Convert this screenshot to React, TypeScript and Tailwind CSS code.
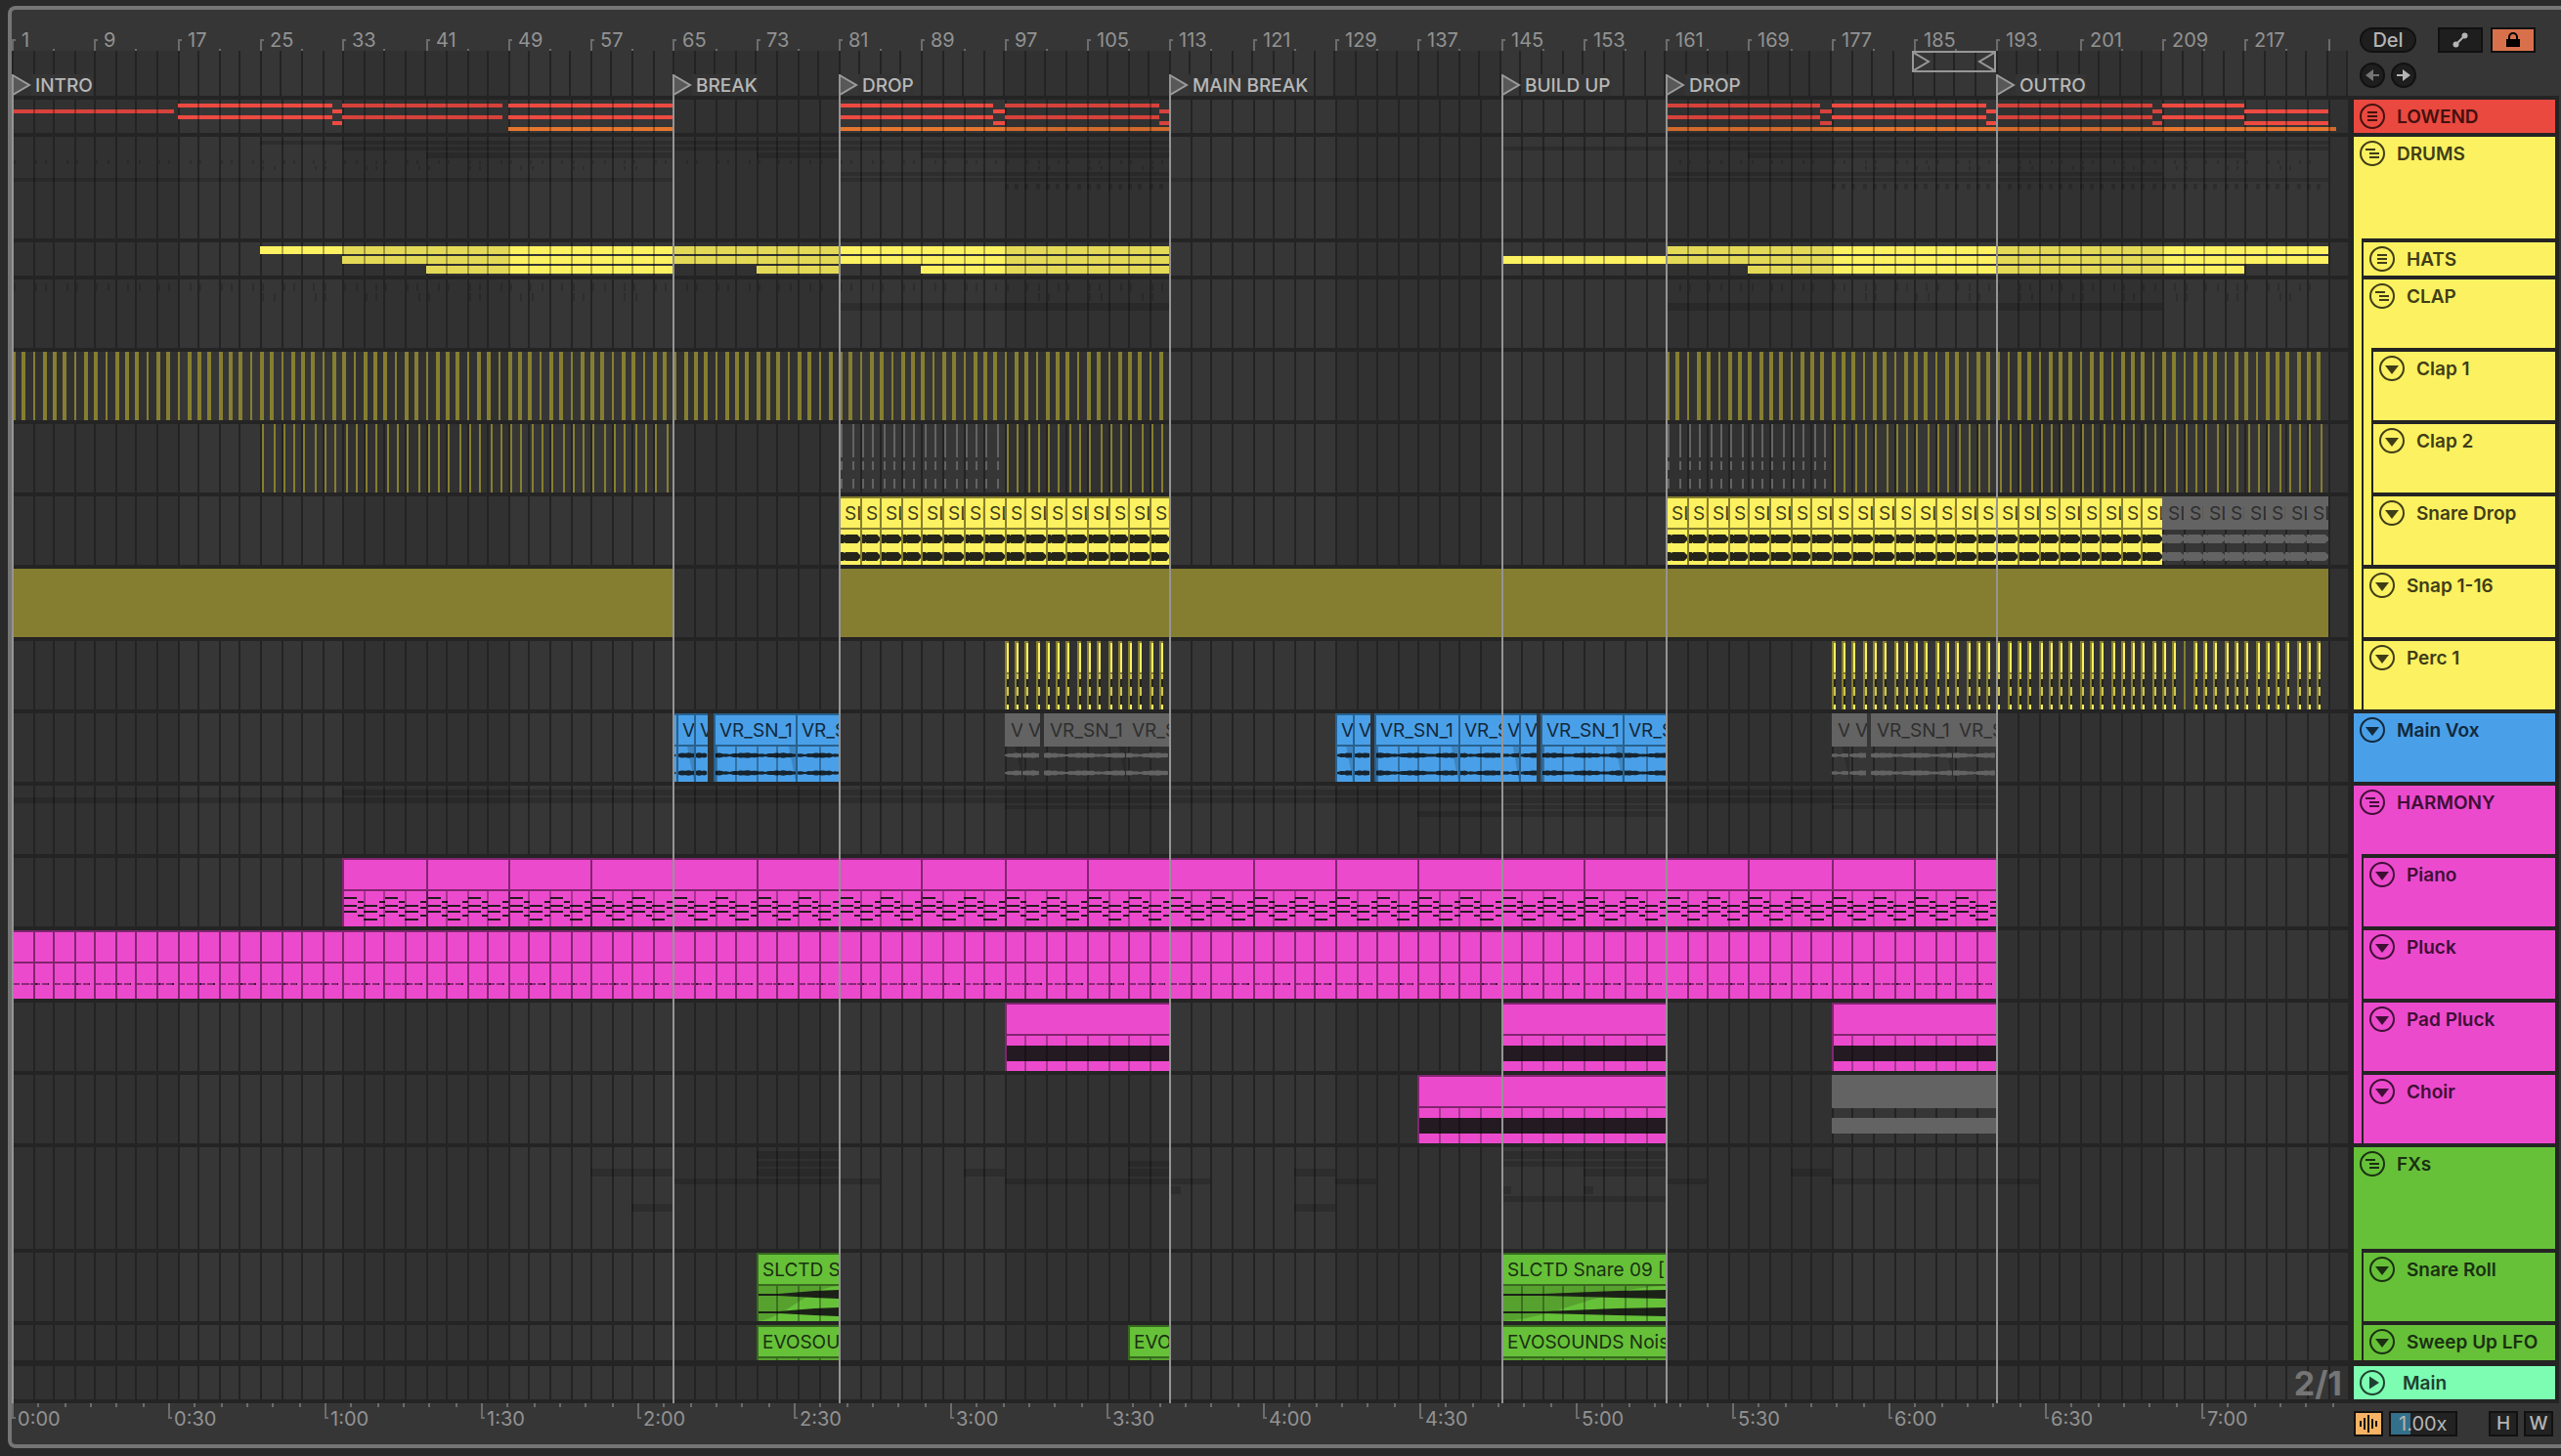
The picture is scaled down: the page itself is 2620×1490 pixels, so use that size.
import type { CSSProperties, ReactNode } from 'react';
import clsx from 'clsx';

const TOTAL_BARS = 225.96;
const SECONDS_PER_BAR = 240 / 121;

type Range = [number, number];

const range = (from: number, to: number, step = 1) => {
  const out: number[] = [];
  for (let n = from; n < to; n += step) out.push(n);
  return out;
};

// Timeline positions follow the window width, snapped to the 2px grid
const at = (bar: number) => `round(nearest, ${((bar - 1) / TOTAL_BARS) * 100}%, 2px)`;
const left = (bar: number): CSSProperties => ({ left: at(bar) });
const span = (from: number, to: number): CSSProperties => ({
  left: at(from),
  width: `calc(${at(to)} - ${at(from)})`,
});

// Cut a range at every 16 bar section, since odd sections are shaded
const sections = (from: number, to: number) => {
  const out: { from: number; to: number; shaded: boolean }[] = [];
  let start = from;
  while (start < to) {
    const index = Math.floor((start - 1) / 16);
    const end = Math.min(to, (index + 1) * 16 + 1);
    out.push({ from: start, to: end, shaded: index % 2 === 0 });
    start = end;
  }
  return out;
};

const linesInside = ([from, to]: Range) =>
  range(1, TOTAL_BARS + 1, 2).filter((bar) => bar > from && bar < to);

const locators = [
  { bar: 1, name: 'INTRO' },
  { bar: 65, name: 'BREAK' },
  { bar: 81, name: 'DROP' },
  { bar: 113, name: 'MAIN BREAK' },
  { bar: 145, name: 'BUILD UP' },
  { bar: 161, name: 'DROP' },
  { bar: 193, name: 'OUTRO' },
];

function Grid() {
  return (
    <div className="absolute inset-0 overflow-hidden">
      {sections(1, TOTAL_BARS + 1).map((s) => (
        <div
          key={s.from}
          className={clsx('absolute inset-y-0', s.shaded ? 'bg-[#313131]' : 'bg-[#363636]')}
          style={span(s.from, s.to)}
        />
      ))}
      {range(1, TOTAL_BARS + 1, 2).map((bar) => (
        <div key={bar} className="absolute inset-y-0 w-[2px] bg-[#232323]" style={left(bar)} />
      ))}
    </div>
  );
}

function BarRuler() {
  return (
    <div className="relative mr-[6px] h-[42px] text-xl text-[#929292]">
      {range(1, 225, 8).map((bar) => (
        <div key={bar} className="absolute inset-y-0" style={left(bar)}>
          <div className="absolute top-[30px] h-3 w-1 border-t-2 border-l-2 border-[#6c6c6c]" />
          <span className="absolute top-5 left-[10px] leading-[22px]">{bar}</span>
        </div>
      ))}
      {range(5, 225, 8).map((bar) => (
        <div key={bar} className="absolute bottom-0 h-[2px] w-[2px] bg-[#6c6c6c]" style={left(bar)} />
      ))}
      <div className="absolute bottom-0 h-3 w-[2px] bg-[#6c6c6c]" style={left(225)} />
    </div>
  );
}

function TimeRuler() {
  const toBar = (seconds: number) => seconds / SECONDS_PER_BAR + 1;
  return (
    <div className="relative mr-[6px] h-[42px] text-xl text-[#929292]">
      {range(0, 448, 5).map((seconds) =>
        seconds % 30 === 0 ? (
          <div key={seconds} className="absolute inset-y-0" style={left(toBar(seconds))}>
            <div className="absolute top-0 h-4 w-1 border-b-2 border-l-2 border-[#6c6c6c]" />
            <span className="absolute top-0 left-[6px] leading-8">
              {Math.floor(seconds / 60)}:{String(seconds % 60).padStart(2, '0')}
            </span>
          </div>
        ) : (
          <div
            key={seconds}
            className="absolute top-0 h-1 w-[2px] bg-[#6c6c6c]"
            style={left(toBar(seconds))}
          />
        )
      )}
    </div>
  );
}

function LoopBrace() {
  return (
    <div className="absolute top-0 flex h-[22px] justify-between border-2 border-[#979797]" style={span(185, 193.1)}>
      <svg width="18" height="18" viewBox="0 0 18 18" fill="none" stroke="#979797" strokeWidth="2">
        <path d="M0 0L15 9L0 18" />
      </svg>
      <svg width="18" height="18" viewBox="0 0 18 18" fill="none" stroke="#979797" strokeWidth="2">
        <path d="M18 0L3 9L18 18" />
      </svg>
    </div>
  );
}

function Locators() {
  return (
    <div className="pointer-events-none absolute top-[66px] right-[6px] bottom-[42px] left-0">
      {locators.map(({ bar, name }) => (
        <div key={bar} className="absolute inset-y-0" style={left(bar)}>
          <div className="absolute inset-y-0 w-[2px] bg-[#949494]" />
          <div className="flex h-[22px]">
            <svg width="20" height="22" viewBox="0 0 20 22" className="shrink-0">
              <path d="M1 1L18 11L1 21Z" fill="#585858" stroke="#9c9c9c" strokeWidth="2" />
            </svg>
            <span className="bg-[#343434] pl-1 font-medium leading-6 whitespace-nowrap text-[#b8b8b8]">
              {name}
            </span>
          </div>
        </div>
      ))}
    </div>
  );
}

function Lane({ height, gap, children }: { height: string; gap?: string; children?: ReactNode }) {
  return (
    <div className={clsx('relative border-[#242424]', gap ?? 'border-t-4')}>
      <div className={clsx('relative overflow-hidden', height)}>{children}</div>
    </div>
  );
}

interface BandProps {
  place: string;
  ranges: Range[];
  color: string;
  shade?: string;
}

function Band({ place, ranges, color, shade }: BandProps) {
  return (
    <>
      {ranges.map(([from, to]) =>
        sections(from, to).map((s) => (
          <div
            key={s.from}
            className={clsx('absolute', place, s.shaded && shade ? shade : color)}
            style={span(s.from, s.to)}
          />
        ))
      )}
      {shade &&
        ranges.flatMap(linesInside).map((bar) => (
          <div key={`l${bar}`} className={clsx('absolute w-[2px] bg-black/30', place)} style={left(bar)} />
        ))}
    </>
  );
}

function Ticks({ place, bars, color, width = 'w-[2px]' }: { place: string; bars: number[]; color: string; width?: string }) {
  return (
    <>
      {bars.map((bar) => (
        <div key={bar} className={clsx('absolute', place, width, color)} style={left(bar)} />
      ))}
    </>
  );
}

const themes = {
  yellow: { line: 'border-[#857e30]', fill: 'bg-[#fcf160]', text: 'text-[#3f3d18]' },
  blue: { line: 'border-[#27618f]', fill: 'bg-[#4aa0e8]', text: 'text-[#12293c]' },
  pink: { line: 'border-[#81256f]', fill: 'bg-[#ec4acd]', text: 'text-[#3f0f36]' },
  green: { line: 'border-[#38691f]', fill: 'bg-[#66c139]', text: 'text-[#1a3010]' },
};

interface ClipProps {
  from: number;
  to: number;
  theme: keyof typeof themes;
  label?: string;
  muted?: boolean;
  children?: ReactNode;
}

function Clip({ from, to, theme, label, muted, children }: ClipProps) {
  const t = themes[theme];
  if (muted) {
    return (
      <div className="absolute inset-y-0 flex flex-col overflow-hidden" style={span(from, to)}>
        <div className="h-[34px] shrink-0 overflow-hidden bg-[#636363] pl-[6px] leading-9 whitespace-nowrap text-[#2e2e2e]">
          {label}
        </div>
        <div className="relative flex-1">{children}</div>
      </div>
    );
  }
  return (
    <div
      className={clsx('absolute inset-y-0 flex flex-col overflow-hidden border-t-2 border-l-2', t.line, t.fill)}
      style={span(from, to)}
    >
      <div
        className={clsx(
          'h-8 shrink-0 overflow-hidden border-b-2 pl-1 leading-8 whitespace-nowrap',
          t.line,
          t.text
        )}
      >
        {label}
      </div>
      <div className="relative flex-1">{children}</div>
    </div>
  );
}

// Bar lines drawn over the lower half of a clip
function BodyLines({ ranges }: { ranges: Range[] }) {
  return (
    <Ticks place="top-[34px] bottom-0" bars={ranges.flatMap(linesInside)} color="bg-black/30" />
  );
}

function Drawing({ width, children }: { width: number; children: ReactNode }) {
  return (
    <svg
      className="absolute inset-0 h-[36px] w-full"
      viewBox={`0 0 ${width} 36`}
      preserveAspectRatio="none"
    >
      {children}
    </svg>
  );
}

function SnareHit({ color }: { color: string }) {
  return (
    <Drawing width={20}>
      <path
        fill={color}
        d="M0 5H3L4 6L5 5H17L20 8V11L17 14H5L4 13L3 14H0ZM0 23H3L4 24L5 23H17L20 26V29L17 32H5L4 31L3 32H0Z"
      />
    </Drawing>
  );
}

const vocalWave = (center: number, width: number, seed: number) => {
  const levels = range(0, width + 1, 2).map((x) => {
    const swell = Math.abs(Math.sin((x + seed) / 11)) * 1.2;
    const grain = Math.abs(Math.sin((x + seed) * 2.7)) * 0.7;
    return { x, amp: 0.8 + swell + grain };
  });
  const top = levels.map(({ x, amp }) => `${x} ${(center - amp).toFixed(1)}`);
  const bottom = levels.map(({ x, amp }) => `${x} ${(center + amp).toFixed(1)}`).reverse();
  return `M${[...top, ...bottom].join('L')}Z`;
};

function Vocal({ width, seed, color, fade }: { width: number; seed: number; color: string; fade?: boolean }) {
  return (
    <Drawing width={width}>
      {fade && <path d={`M${width - 7} 0L${width} 36V0Z`} fill="#000" fillOpacity="0.16" />}
      <path d={vocalWave(9, width, seed)} fill={color} />
      <path d={vocalWave(27, width, seed)} fill={color} />
    </Drawing>
  );
}

interface Phrase {
  from: number;
  to: number;
  label?: string;
  fade?: boolean;
}

const phrases: Phrase[] = [
  { from: 65, to: 65.35 },
  { from: 65.35, to: 66.9, label: 'VR_SN_1', fade: true },
  { from: 66.9, to: 68.4, label: 'VR_SN_1' },
  { from: 68.85, to: 76.85, label: 'VR_SN_1', fade: true },
  { from: 76.85, to: 81, label: 'VR_SN_1' },
  { from: 129, to: 130.7, label: 'VR_SN_1', fade: true },
  { from: 130.7, to: 132.4, label: 'VR_SN_1' },
  { from: 132.8, to: 140.9, label: 'VR_SN_1', fade: true },
  { from: 140.9, to: 145, label: 'VR_SN_1' },
  { from: 145, to: 146.8, label: 'VR_SN_1', fade: true },
  { from: 146.8, to: 148.4, label: 'VR_SN_1' },
  { from: 148.8, to: 156.8, label: 'VR_SN_1', fade: true },
  { from: 156.8, to: 161, label: 'VR_SN_1' },
];

const mutedPhrases: Phrase[] = [97, 177].flatMap((start) => [
  { from: start, to: start + 1.7, label: 'VR_SN_1', fade: true },
  { from: start + 1.7, to: start + 3.4, label: 'VR_SN_1' },
  { from: start + 3.8, to: start + 11.7, label: 'VR_SN_1', fade: true },
  { from: start + 11.7, to: start + 16, label: 'VR_SN_1' },
]);

// Two bars of chords up, two bars down, repeated over the eight bar clip
function PianoNotes() {
  return (
    <svg className="absolute inset-0 h-[36px] w-full" viewBox="0 0 84 36" preserveAspectRatio="none" shapeRendering="crispEdges">
      {[0, 42].map((x) => (
        <g key={x} fill="#24191f">
          {[6, 14, 20].map((y) => (
            <rect key={y} x={x} y={y} width="13" height="2" />
          ))}
          {[14, 20, 28].map((y) => (
            <rect key={y} x={x + 20} y={y} width="14" height="2" />
          ))}
          {[10, 16, 24].map((y) => (
            <g key={y}>
              <rect x={x + 14} y={y} width="6" height="2" />
              <rect x={x + 36} y={y} width="6" height="2" />
            </g>
          ))}
        </g>
      ))}
    </svg>
  );
}

function PluckNotes({ index }: { index: number }) {
  return (
    <svg className="absolute inset-0 h-[36px] w-full" viewBox="0 0 20 36" preserveAspectRatio="none" shapeRendering="crispEdges">
      <path d="M0 20h6v2H0zM8 20h8v2H8z" fill="#8b2a77" />
      {index % 2 === 1 && <path d="M0 20h2v2H0zM14 20h2v2h-2z" fill="#3a1734" />}
      {index % 2 === 0 && <path d="M17 20h3v2h-3z" fill="#8b2a77" />}
    </svg>
  );
}

function Riser() {
  return (
    <Drawing width={100}>
      <path d="M0 0H100V36H0Z" fill="#57a22f" />
      <path d="M0 36C35 32 60 2 100 0V36Z" fill="#66c139" />
      <path d="M0 8L25 8L70 5L100 4V13L70 12L25 10H0ZM0 26H25L70 23L100 22V31L70 30L25 28H0Z" fill="#1c2118" />
    </Drawing>
  );
}

function PercHit({ bar }: { bar: number }) {
  return (
    <div className="absolute inset-y-0 flex w-1 flex-col border-l-2 border-[#857e30]" style={left(bar)}>
      <div className="h-[2px] bg-[#857e30]" />
      <div className="h-[30px] bg-[#fcf160]" />
      <div className="h-[2px] bg-[#857e30]" />
      <div className="h-[5px] bg-[#cfc650]" />
      <div className="h-2 bg-[#24241a]" />
      <div className="h-[9px] bg-[#cfc650]" />
      <div className="h-[9px] bg-[#24241a]" />
      <div className="h-[5px] bg-[#fcf160]" />
    </div>
  );
}

const hats: Range[][] = [
  [[25, 113], [161, 225]],
  [[33, 113], [145, 225]],
  [[41, 65], [73, 81], [89, 113], [169, 217]],
];
const bass: Range[] = [[17, 32], [33, 48.5], [49, 65], [81, 96], [97, 112], [161, 176], [177, 192], [193, 208], [209, 217]];
const fills: Range[] = [[32, 33], [96, 97], [112, 113], [176, 177], [192, 193], [208, 209], [217, 225]];
const clap1 = [...range(1, 113), ...range(161, 225)];
const clap2 = [...range(25, 65), ...range(97, 113), ...range(177, 225)].map((bar) => bar + 0.25);
const clap2Muted = [...range(81, 97), ...range(161, 177)].map((bar) => bar + 0.25);
const ghost1 = clap1.filter((bar) => bar % 3 !== 2).map((bar) => bar + 0.2);
const ghost2 = clap2.filter((bar) => Math.floor(bar) % 5 < 2);
const perc = [...range(97, 113), ...range(177, 225)];
const pads: Range[] = [[97, 113], [145, 161], [177, 193]];

const red = { color: 'bg-[#ee4a41]', shade: 'bg-[#d6423b]' };
const orange = { color: 'bg-[#e7762e]', shade: 'bg-[#d16a2a]' };
const yellow = { color: 'bg-[#fcf160]', shade: 'bg-[#e3d957]' };
const faint = 'bg-black/15';

function Arrangement() {
  return (
    <div className="border-b-4 border-[#242424] bg-[#242424] pr-[6px]">
      <div className="relative">
        <Grid />
        <Lane height="h-[34px]">
          <Band place="top-1 h-1" ranges={bass} {...red} />
          <Band place="top-[10px] h-1" ranges={[[1, 16.7], ...fills]} {...red} />
          <Band place="top-4 h-1" ranges={bass} {...red} />
          <Band place="top-[22px] h-1" ranges={fills} {...red} />
          <Band place="top-7 h-1" ranges={[[49, 65], [81, 113], [161, 225.9]]} {...orange} />
        </Lane>
        <Lane height="h-[104px]">
          <Band place="top-1 h-1" ranges={hats[0]} color={faint} />
          <Band place="top-[10px] h-1" ranges={hats[1]} color={faint} />
          <Band place="top-4 h-[6px]" ranges={hats[2]} color={faint} />
          <Ticks place="top-6 h-1" bars={ghost1} color={faint} />
          <Ticks place="top-[30px] h-1" bars={ghost2} color={faint} />
          <Band place="top-9 h-1" ranges={[[81, 113], [161, 209]]} color={faint} />
          <Band place="top-[42px] h-1" ranges={[[1, 65], [81, 225]]} color={faint} />
          <Ticks place="top-12 h-[6px]" bars={perc} color={faint} width="w-1" />
        </Lane>
        <Lane height="h-[34px]">
          <Band place="top-1 h-2" ranges={hats[0]} {...yellow} />
          <Band place="top-[14px] h-2" ranges={hats[1]} {...yellow} />
          <Band place="top-6 h-2" ranges={hats[2]} {...yellow} />
        </Lane>
        <Lane height="h-[70px]">
          <Ticks place="top-1 h-2" bars={ghost1} color={faint} />
          <Ticks place="top-[14px] h-2" bars={ghost2} color={faint} />
          <Band place="top-6 h-2" ranges={[[81, 113], [161, 209]]} color={faint} />
        </Lane>
        <Lane height="h-[70px]">
          {clap1.map((bar) => (
            <div key={bar} className="absolute inset-y-0 bg-[#857e30]" style={span(bar, bar + 0.33)} />
          ))}
        </Lane>
        <Lane height="h-[70px]">
          <Ticks place="inset-y-0" bars={clap2} color="bg-[#857e30]" />
          <Ticks place="top-0 h-[34px]" bars={clap2Muted} color="bg-[#636363]" />
          <Ticks place="top-[38px] h-[9px]" bars={clap2Muted} color="bg-[#636363]" />
          <Ticks place="top-14 h-[10px]" bars={clap2Muted} color="bg-[#636363]" />
        </Lane>
        <Lane height="h-[70px]">
          {[...range(81, 113, 2), ...range(161, 209, 2)].map((bar) => (
            <Clip key={bar} from={bar} to={bar + 2} theme="yellow" label="SLCTD">
              <SnareHit color="#24241a" />
            </Clip>
          ))}
          {range(209, 225, 2).map((bar) => (
            <Clip key={bar} from={bar} to={bar + 2} theme="yellow" label="SLCTD" muted>
              <SnareHit color="#636363" />
            </Clip>
          ))}
        </Lane>
        <Lane height="h-[70px]">
          <Band place="inset-y-0" ranges={[[1, 65], [81, 225]]} color="bg-[#857e30]" />
        </Lane>
        <Lane height="h-[70px]">
          {perc
            .filter((bar) => bar !== 211)
            .map((bar) => (
              <PercHit key={bar} bar={bar} />
            ))}
          <Ticks place="inset-y-0" bars={[211]} color="bg-[#857e30]" />
        </Lane>
        <Lane height="h-[70px]">
          {phrases.map((p, i) => (
            <Clip key={p.from} from={p.from} to={p.to} theme="blue" label={p.label}>
              <Vocal width={Math.round((p.to - p.from) * 10)} seed={i * 7} color="#16242f" fade={p.fade} />
            </Clip>
          ))}
          {mutedPhrases.map((p, i) => (
            <Clip key={p.from} from={p.from} to={p.to} theme="blue" label={p.label} muted>
              <Vocal width={Math.round((p.to - p.from) * 10)} seed={i * 7} color="#636363" fade={p.fade} />
            </Clip>
          ))}
          <BodyLines ranges={[[68.85, 76], [77, 81], [132.8, 140], [141, 145], [148.8, 156], [157, 161]]} />
        </Lane>
        <Lane height="h-[70px]">
          <Band place="top-1 h-[6px]" ranges={[[33, 193]]} color={faint} />
          <Band place="top-3 h-[6px]" ranges={[[1, 193]]} color={faint} />
          <Band place="top-5 h-1" ranges={pads} color={faint} />
          <Band place="top-[26px] h-[6px]" ranges={[[137, 161]]} color={faint} />
        </Lane>
        <Lane height="h-[70px]">
          {range(33, 193, 8).map((bar) => (
            <Clip key={bar} from={bar} to={bar + 8} theme="pink">
              <PianoNotes />
            </Clip>
          ))}
          <BodyLines ranges={[[33, 193]]} />
        </Lane>
        <Lane height="h-[70px]">
          {range(1, 193, 2).map((bar, i) => (
            <Clip key={bar} from={bar} to={bar + 2} theme="pink">
              <PluckNotes index={i} />
            </Clip>
          ))}
        </Lane>
        <Lane height="h-[70px]">
          {pads.map(([from, to]) => (
            <Clip key={from} from={from} to={to} theme="pink">
              <div className="mt-[10px] h-4 bg-[#241a22]" />
            </Clip>
          ))}
          <BodyLines ranges={pads} />
        </Lane>
        <Lane height="h-[70px]">
          <Clip from={137} to={161} theme="pink">
            <div className="mt-[10px] h-4 bg-[#241a22]" />
          </Clip>
          <Clip from={177} to={193} theme="pink" muted>
            <div className="mt-[10px] h-4 bg-[#636363]" />
          </Clip>
          <BodyLines ranges={[[137, 161]]} />
        </Lane>
        <Lane height="h-[104px]">
          <Band place="top-1 h-2" ranges={[[73, 81], [145, 161]]} color={faint} />
          <Band place="top-[14px] h-[6px]" ranges={[[73, 81], [109, 113], [145, 161]]} color={faint} />
          <Band
            place="top-[22px] h-2"
            ranges={[[57, 65], [73, 81], [93, 97], [109, 113], [125, 129], [153, 161], [173, 177]]}
            color={faint}
          />
          <Band place="top-8 h-[6px]" ranges={[[65, 85], [97, 117], [129, 133], [161, 165], [177, 197]]} color={faint} />
          <Band place="top-10 h-2" ranges={[[113, 114], [145, 146], [153, 154]]} color={faint} />
          <Band place="top-[50px] h-[6px]" ranges={[[145, 161]]} color={faint} />
          <Band place="top-[58px] h-2" ranges={[[61, 65], [125, 129]]} color={faint} />
        </Lane>
        <Lane height="h-[70px]">
          <Clip from={73} to={81} theme="green" label="SLCTD Snare 09 [">
            <Riser />
          </Clip>
          <Clip from={145} to={161} theme="green" label="SLCTD Snare 09 [">
            <Riser />
          </Clip>
          <BodyLines ranges={[[73, 81], [145, 161]]} />
        </Lane>
        <Lane height="h-[36px]">
          {([[73, 81], [109, 113], [145, 161]] as Range[]).map(([from, to]) => (
            <Clip key={from} from={from} to={to} theme="green" label="EVOSOUNDS Noise">
              <div className="h-full bg-[#57a22f]" />
            </Clip>
          ))}
          <BodyLines ranges={[[73, 81], [109, 113], [145, 161]]} />
        </Lane>
        <Lane height="h-[34px]" gap="border-t-[6px]">
          <span className="absolute right-[6px] text-[34px] leading-9 font-bold text-[#757575]">2/1</span>
        </Lane>
      </div>
    </div>
  );
}

type IconKind = 'folded' | 'unfolded' | 'track' | 'play';

const iconPaths: Record<IconKind, ReactNode> = {
  folded: <path d="M8 9h10M8 13h10M8 17h10" stroke="currentColor" strokeWidth="2" />,
  unfolded: <path d="M6 9h10M10 13h10M10 17h10" stroke="currentColor" strokeWidth="2" />,
  track: <path d="M6 10h14l-7 9z" fill="currentColor" />,
  play: <path d="M10 6.5l10 6.5-10 6.5z" fill="currentColor" />,
};

interface Track {
  name: string;
  icon: IconKind;
  height: string;
  color: string;
  children?: Track[];
}

const Y = 'bg-[#fcf160] text-[#3f3d18]';
const P = 'bg-[#ec4acd] text-[#3f0f36]';
const G = 'bg-[#66c139] text-[#1a3010]';

const tracks: Track[] = [
  { name: 'LOWEND', icon: 'folded', height: 'h-[34px]', color: 'bg-[#ea4940] text-[#42110f]' },
  {
    name: 'DRUMS',
    icon: 'unfolded',
    height: 'h-[104px]',
    color: Y,
    children: [
      { name: 'HATS', icon: 'folded', height: 'h-[34px]', color: Y },
      {
        name: 'CLAP',
        icon: 'unfolded',
        height: 'h-[70px]',
        color: Y,
        children: [
          { name: 'Clap 1', icon: 'track', height: 'h-[70px]', color: Y },
          { name: 'Clap 2', icon: 'track', height: 'h-[70px]', color: Y },
          { name: 'Snare Drop', icon: 'track', height: 'h-[70px]', color: Y },
        ],
      },
      { name: 'Snap 1-16', icon: 'track', height: 'h-[70px]', color: Y },
      { name: 'Perc 1', icon: 'track', height: 'h-[70px]', color: Y },
    ],
  },
  { name: 'Main Vox', icon: 'track', height: 'h-[70px]', color: 'bg-[#4aa0e8] text-[#12293c]' },
  {
    name: 'HARMONY',
    icon: 'unfolded',
    height: 'h-[70px]',
    color: P,
    children: [
      { name: 'Piano', icon: 'track', height: 'h-[70px]', color: P },
      { name: 'Pluck', icon: 'track', height: 'h-[70px]', color: P },
      { name: 'Pad Pluck', icon: 'track', height: 'h-[70px]', color: P },
      { name: 'Choir', icon: 'track', height: 'h-[70px]', color: P },
    ],
  },
  {
    name: 'FXs',
    icon: 'unfolded',
    height: 'h-[104px]',
    color: G,
    children: [
      { name: 'Snare Roll', icon: 'track', height: 'h-[70px]', color: G },
      { name: 'Sweep Up LFO', icon: 'track', height: 'h-[36px]', color: G },
    ],
  },
];

function TrackTitle({ name, icon, height, color, wide }: Track & { wide?: boolean }) {
  return (
    <div className={clsx('flex items-start pt-1 pl-[6px]', wide ? 'gap-[18px]' : 'gap-3', height, color)}>
      <button type="button" aria-label={name} className="shrink-0">
        <svg width="26" height="26" viewBox="0 0 26 26" fill="none" className="block">
          <circle cx="13" cy="13" r="12" stroke="currentColor" strokeWidth="2" />
          {iconPaths[icon]}
        </svg>
      </button>
      <span className="leading-7 font-semibold whitespace-nowrap">{name}</span>
    </div>
  );
}

function TrackHeader(track: Track) {
  if (!track.children) return <TrackTitle {...track} />;
  return (
    <div className={track.color}>
      <TrackTitle {...track} />
      <div className="ml-2 flex flex-col gap-1 bg-[#242424] pt-1 pl-[2px]">
        {track.children.map((child) => (
          <TrackHeader key={child.name} {...child} />
        ))}
      </div>
    </div>
  );
}

function Toolbar() {
  return (
    <div className="flex h-[88px] flex-col gap-[10px] pt-[18px] pl-[6px] text-[#b5b5b5]">
      <div className="flex h-[26px]">
        <button type="button" className="w-[58px] rounded-full border-2 border-[#111] bg-[#1e1e1e] text-xl leading-[22px] font-medium">
          Del
        </button>
        <button type="button" aria-label="Automation" className="ml-[22px] flex w-[46px] items-center justify-center border-2 border-[#111] bg-[#1e1e1e]">
          <svg width="16" height="16" viewBox="0 0 16 16" fill="currentColor">
            <circle cx="12.5" cy="3.5" r="3" />
            <circle cx="3.5" cy="12.5" r="3" />
            <path d="M12.5 3.5L3.5 12.5" stroke="currentColor" strokeWidth="2" />
          </svg>
        </button>
        <button type="button" aria-label="Lock" className="ml-2 flex w-[46px] items-center justify-center border-2 border-[#111] bg-[#d8714b]">
          <svg width="14" height="16" viewBox="0 0 14 16">
            <path d="M3 8V5a4 4 0 0 1 8 0v3" fill="none" stroke="#000" strokeWidth="2" />
            <path d="M0 7h14v8H0z" />
          </svg>
        </button>
      </div>
      <div className="flex h-[26px] gap-[6px]">
        <button type="button" aria-label="Previous locator" className="flex w-[26px] items-center justify-center rounded-full border-2 border-[#111] bg-[#1e1e1e] text-[#757575]">
          <svg width="14" height="12" viewBox="0 0 14 12" fill="currentColor">
            <path d="M0 6L8 0V5H14V7H8V12Z" />
          </svg>
        </button>
        <button type="button" aria-label="Next locator" className="flex w-[26px] items-center justify-center rounded-full border-2 border-[#111] bg-[#1e1e1e]">
          <svg width="14" height="12" viewBox="0 0 14 12" fill="currentColor">
            <path d="M14 6L6 0V5H0V7H6V12Z" />
          </svg>
        </button>
      </div>
    </div>
  );
}

function ZoomBar() {
  return (
    <div className="flex h-[42px] pt-2 text-[#b5b5b5]">
      <button type="button" aria-label="Waveform zoom" className="flex h-[26px] w-[30px] items-center justify-center border-2 border-[#111] bg-[#f7b365]">
        <svg width="18" height="18" viewBox="0 0 18 18" stroke="#111" strokeWidth="2">
          <path d="M1 6v6M5 3v12M9 0v18M13 4v10M17 6v6" />
        </svg>
      </button>
      <input
        aria-label="Waveform height"
        defaultValue="1.00x"
        className="ml-[6px] h-[26px] w-[70px] border-2 border-[#111] bg-[#222] bg-[linear-gradient(90deg,#33708a_20px,transparent_20px)] pl-2 text-xl leading-[22px]"
      />
      <button type="button" className="ml-8 h-[26px] w-[30px] border-2 border-[#111] bg-[#222] leading-[22px] font-medium">
        H
      </button>
      <button type="button" className="ml-[6px] h-[26px] w-[30px] border-2 border-[#111] bg-[#222] leading-[22px] font-medium">
        W
      </button>
    </div>
  );
}

export default function App() {
  return (
    <div className="min-h-screen bg-[#2a2a2a] pt-[6px] pb-2 pl-2 font-['Inter',sans-serif] text-[19px]">
      <div className="flex overflow-hidden rounded-l-lg border-y-4 border-l-4 border-[#757575] bg-[#363636]">
        <main className="relative min-w-0 flex-1">
          <BarRuler />
          <div className="relative mr-[6px] h-[46px] border-r-2 border-[#242424]">
            <Grid />
            <LoopBrace />
          </div>
          <Arrangement />
          <TimeRuler />
          <Locators />
        </main>
        <aside className="w-[212px] shrink-0">
          <Toolbar />
          <div className="border-r-2 border-[#363636] bg-[#242424] py-1 pr-1">
            <div className="flex flex-col gap-1">
              {tracks.map((track) => (
                <TrackHeader key={track.name} {...track} />
              ))}
            </div>
            <div className="mt-[6px]">
              <TrackTitle name="Main" icon="play" height="h-[34px]" color="bg-[#7dfdb1] text-[#1f4031]" wide />
            </div>
          </div>
          <ZoomBar />
        </aside>
      </div>
    </div>
  );
}
